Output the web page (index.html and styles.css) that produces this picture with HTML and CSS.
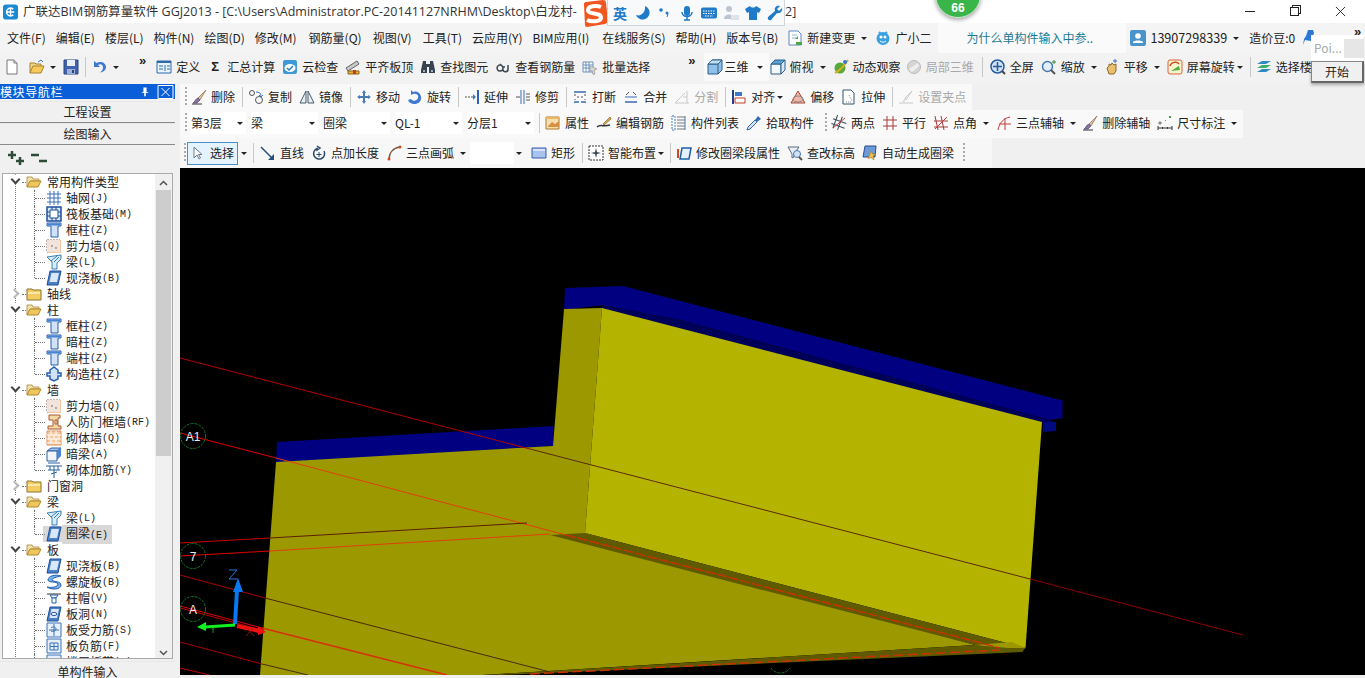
FILE: index.html
```html
<!DOCTYPE html>
<html lang="zh-CN">
<head>
<meta charset="utf-8">
<title>广联达BIM钢筋算量软件 GGJ2013</title>
<link rel="stylesheet" href="styles.css">
</head>
<body>
<svg class="defs" aria-hidden="true">
<symbol id="new" viewBox="0 0 16 16"><path d="M3 1h7l3 3v11H3z" fill="#fff" stroke="#777"/><path d="M10 1v3h3" fill="#ddd" stroke="#777"/></symbol>
<symbol id="open" viewBox="0 0 16 16"><path d="M1 14V4h5l1 1h5v2" fill="#f0d48a" stroke="#a8842c"/><path d="M1 14l3-7h11l-3 7z" fill="#f7c95c" stroke="#a8842c"/><path d="M9 3l3-2 2 2" fill="none" stroke="#3a78c8"/></symbol>
<symbol id="save" viewBox="0 0 16 16"><path d="M1 1h14v14H1z" fill="#3f62b0" stroke="#2a437e"/><path d="M4 1h8v6H4z" fill="#e8eef8"/><path d="M4 10h8v5H4z" fill="#9fb0d6"/><path d="M9 11h2v3H9z" fill="#2a437e"/></symbol>
<symbol id="undo" viewBox="0 0 16 16"><path d="M2 2v6h6L6 6c2-1.500 5-.5 5 2.500 0 2-1 3.500-3 5 4-.5 6-3 6-5.500C14 4 9 1.500 4.500 4z" fill="#3f78d0"/></symbol>
<symbol id="def" viewBox="0 0 16 16"><path d="M1 2h14v12H1z" fill="#eaf2fb" stroke="#2d6ca8"/><path d="M1 2h14v2H1z" fill="#2d6ca8"/><path d="M3 7h4M3 10h4M9 6v6M11 7h3M11 10h3" stroke="#2d6ca8" fill="none"/></symbol>
<symbol id="cloud" viewBox="0 0 16 16"><rect x="1" y="1" width="14" height="14" rx="2" fill="#3d9ad6"/><ellipse cx="8" cy="9" rx="5.500" ry="4" fill="#fff"/><path d="M5 9l2 2 4-4" fill="none" stroke="#2a7fc0" stroke-width="1.500"/></symbol>
<symbol id="level" viewBox="0 0 16 16"><path d="M1 9L12 2l2 3L3 12z" fill="#c8c8c8" stroke="#666"/><path d="M3 12h11v3H3z" fill="#e8b23a" stroke="#8a6414"/><path d="M8 11h3v4H8z" fill="#c83a1c"/></symbol>
<symbol id="binoc" viewBox="0 0 16 16"><path d="M3 2h3v3h4V2h3l2 9v3H9V8H7v6H1v-3z" fill="#37444f"/><path d="M3 11h2v2H3zM11 11h2v2h-2z" fill="#9fb4c6"/></symbol>
<symbol id="glass" viewBox="0 0 16 16"><path d="M5 6a3 3 0 1 0 .1 0M13 6v4a2.500 2.500 0 0 1-5 .5M5 5l3 3h2" fill="none" stroke="#3b4650" stroke-width="1.500"/></symbol>
<symbol id="batch" viewBox="0 0 16 16"><path d="M1 3h10v10H1z" fill="#fff" stroke="#6c8fb8"/><path d="M1 6h10M1 9h10M4 3v10M7 3v10" stroke="#6c8fb8"/><path d="M8 7l7 3-3 1 1 4-2 .500-1-4-2 1z" fill="#d9d9d9" stroke="#888" stroke-width=".6"/></symbol>
<symbol id="c3d" viewBox="0 0 16 16"><path d="M1 5l4-4h10v10l-4 4H1z" fill="#8fc0e8" stroke="#2f5f8a"/><path d="M1 5h10v10M11 5l4-4" fill="none" stroke="#2f5f8a"/><path d="M1 5l4-4h10l-4 4z" fill="#c4e0f4" stroke="#2f5f8a"/></symbol>
<symbol id="ctop" viewBox="0 0 16 16"><path d="M1 5h10v10H1z" fill="#f2f8fc" stroke="#2f5f8a"/><path d="M1 5l4-4h10l-4 4z" fill="#5aa0d8" stroke="#2f5f8a"/><path d="M11 5l4-4v10l-4 4z" fill="#d8e8f4" stroke="#2f5f8a"/></symbol>
<symbol id="orbit" viewBox="0 0 16 16"><circle cx="7" cy="9" r="5.500" fill="#5aa83a"/><path d="M2 14C6 12 11 7 15 1" stroke="#d8b020" stroke-width="2" fill="none"/><circle cx="12" cy="3" r="2" fill="#3a78c8"/></symbol>
<symbol id="loc3" viewBox="0 0 16 16"><circle cx="8" cy="8" r="6.500" fill="#d5d5d5" stroke="#bbb"/><path d="M3 10l9-6 1 3-7 6z" fill="#efefef"/></symbol>
<symbol id="full" viewBox="0 0 16 16"><circle cx="7.500" cy="7.500" r="6.500" fill="#cfe2f6" stroke="#2a5c9a" stroke-width="1.500"/><path d="M7.500 3v9M3 7.500h9" stroke="#2a5c9a" stroke-width="1.500"/><path d="M12 12l3 3" stroke="#444" stroke-width="2"/></symbol>
<symbol id="zoom" viewBox="0 0 16 16"><circle cx="6.500" cy="7.500" r="5" fill="#e2eefa" stroke="#4a78ac" stroke-width="1.500"/><path d="M10 11l4 4" stroke="#555" stroke-width="2"/><path d="M13 1v4M11 3h4" stroke="#3a8a3a"/></symbol>
<symbol id="pan" viewBox="0 0 16 16"><path d="M3 9l2-2V5l2 1 1-2 2 2 2-1v7l-2 3H5z" fill="#e8c070" stroke="#8a6a28"/><path d="M11 0v4M9 2h4" stroke="#3a6ac0"/></symbol>
<symbol id="rota" viewBox="0 0 16 16"><rect x="1" y="1" width="14" height="14" rx="2" fill="#f2f6d0" stroke="#e0603a"/><path d="M3 7c1-4 7-5 9-2" fill="none" stroke="#d04a20" stroke-width="1.500"/><path d="M4 12l8-5 1 4z" fill="#5aa83a"/></symbol>
<symbol id="floors" viewBox="0 0 16 16"><path d="M1 5l5-3h9L10 5z" fill="#2f8ac4"/><path d="M1 9l5-3h9l-5 3z" fill="#3cae6c"/><path d="M1 13l5-3h9l-5 3z" fill="#2f8ac4"/></symbol>
<symbol id="erase" viewBox="0 0 16 16"><path d="M15 1L7 9l2 2z" fill="#d8c4a0" stroke="#8a6a48" stroke-width=".7"/><path d="M7 9l2 2-3 3H2c2-1 2-4 5-5z" fill="#8a70a8" stroke="#5a4a70" stroke-width=".7"/><path d="M1 15h10" stroke="#333"/></symbol>
<symbol id="copy" viewBox="0 0 16 16"><circle cx="4" cy="4" r="2.500" fill="none" stroke="#555"/><circle cx="11" cy="11" r="3.500" fill="none" stroke="#555"/><path d="M8 3c3 0 5 1 5 4" fill="none" stroke="#3a78c8"/><path d="M11 6l2 2 2-2" fill="none" stroke="#3a78c8"/></symbol>
<symbol id="mirror" viewBox="0 0 16 16"><path d="M7 2L1 14h6zM9 2l6 12H9z" fill="#e6eef6" stroke="#4a5a6a"/></symbol>
<symbol id="move" viewBox="0 0 16 16"><path d="M8 1l2 3H9v3h3V6l3 2-3 2V9H9v3h1l-2 3-2-3h1V9H4v1L1 8l3-2v1h3V4H6z" fill="#4a7ab8"/></symbol>
<symbol id="rot" viewBox="0 0 16 16"><path d="M4 1v5l2-1c3-1 6 1 5 4s-5 4-7 1l-3 1c2 6 12 5 13-1 1-5-4-9-8-7z" fill="#3f78d0"/></symbol>
<symbol id="ext" viewBox="0 0 16 16"><path d="M1 8h9" stroke="#555" stroke-dasharray="2 1"/><path d="M9 5l3 3-3 3z" fill="#3a78c8"/><path d="M14 1v14" stroke="#2f5fb0" stroke-width="2"/></symbol>
<symbol id="trim" viewBox="0 0 16 16"><path d="M6 1v14M9 1v14" stroke="#3a6ab0"/><path d="M1 8h4M11 5h4M11 8h4M11 11h4" stroke="#555"/></symbol>
<symbol id="brk" viewBox="0 0 16 16"><path d="M2 3h12M2 13h5M9 13h5" stroke="#3a6ab0" stroke-width="1.500"/><path d="M5 8h2M9 8h2M3 5v2M13 5v2M3 11v-1M13 11v-1" stroke="#555"/></symbol>
<symbol id="merge" viewBox="0 0 16 16"><path d="M2 13h12" stroke="#3a6ab0" stroke-width="1.500"/><path d="M2 8h12" stroke="#3a6ab0"/><path d="M3 6l3-3M13 6l-3-3" stroke="#555" fill="none"/></symbol>
<symbol id="split" viewBox="0 0 16 16"><path d="M1 14h14M1 14L11 4M13 2v12M9 8h4" stroke="#c8c8c8" fill="none"/></symbol>
<symbol id="algn" viewBox="0 0 16 16"><path d="M2 1v14" stroke="#1f3f90" stroke-width="2"/><path d="M4 3h7v4H4z" fill="#3a78c8"/><path d="M4 9h10v5H4z" fill="#fff" stroke="#c83a1c"/></symbol>
<symbol id="offs" viewBox="0 0 16 16"><path d="M8 1l7 12H1z" fill="#f2b6a8" stroke="#a8483a" transform="translate(0 1)"/><ellipse cx="8" cy="10" rx="5" ry="3" fill="none" stroke="#888"/></symbol>
<symbol id="strch" viewBox="0 0 16 16"><path d="M2 1h8l3 3v11H2z" fill="#fff" stroke="#33556e"/><path d="M8 6l3 6M5 13h6" stroke="#888" stroke-dasharray="1 1"/></symbol>
<symbol id="grip" viewBox="0 0 16 16"><path d="M14 2L7 9l1 2zM1 14h14" stroke="#c8c8c8" fill="none"/><path d="M7 9l-3 4h3z" fill="#ddd"/></symbol>
<symbol id="attr" viewBox="0 0 16 16"><path d="M1 2h13v12H1z" fill="#f7deb0" stroke="#a87a2c"/><path d="M1 2h13v2H1z" fill="#e8b868"/><path d="M3 11l4-4 3 2 4-3v6H3z" fill="#d89040"/></symbol>
<symbol id="edit" viewBox="0 0 16 16"><path d="M1 12c3-3 6 0 13-2" fill="none" stroke="#333" stroke-width="1.500"/><path d="M14 2L7 9l1 1 7-6z" fill="#d8a85a" stroke="#8a6a28" stroke-width=".7"/></symbol>
<symbol id="list" viewBox="0 0 16 16"><path d="M6 2h8M6 5h8M6 8h8M6 11h8M6 14h8" stroke="#777"/><path d="M1 1h3v14H1z" fill="#fff" stroke="#4a7ab8" stroke-dasharray="2 1"/><path d="M14 1v14" stroke="#4a7ab8"/></symbol>
<symbol id="pick" viewBox="0 0 16 16"><path d="M12 1l3 3-4 3-2-2z" fill="#3a6ab0"/><path d="M9 5l2 2-7 7-3 1 1-3z" fill="#cfe2f6" stroke="#3a6ab0"/></symbol>
<symbol id="two" viewBox="0 0 16 16"><path d="M4 1v14M9 1v14M1 6h14M1 11h14" stroke="#3a4a5a" transform="rotate(20 8 8)"/><path d="M2 13L14 3" stroke="#c83a3a"/></symbol>
<symbol id="para" viewBox="0 0 16 16"><path d="M5 1v14M11 1v14M1 5h14M1 11h14" stroke="#a83a3a"/></symbol>
<symbol id="angl" viewBox="0 0 16 16"><path d="M2 1l3 14M8 1l3 14M1 6h14M1 12h14" stroke="#a83a3a"/><path d="M2 14L14 2" stroke="#c83a3a"/></symbol>
<symbol id="three" viewBox="0 0 16 16"><path d="M2 15C3 8 8 3 14 2M9 3v12M3 9h12" stroke="#c83a3a" fill="none"/></symbol>
<symbol id="dim" viewBox="0 0 16 16"><path d="M1 11v4M15 11v4M1 13h14" stroke="#333"/><path d="M5 13h1M10 13h1" stroke="#333" stroke-width="2"/><path d="M12 1h2v2h-2z" fill="#4a9a4a"/><path d="M2 7h2v2H2zM8 5l1 1" stroke="#888" fill="#888"/></symbol>
<symbol id="cursor" viewBox="0 0 16 16"><path d="M5 2v11l3-3 2 4 1.500-1-2-3.500h3.500z" fill="#fff" stroke="#6a7a8a"/></symbol>
<symbol id="line" viewBox="0 0 16 16"><path d="M1 2l12 12" stroke="#25517a" stroke-width="1.500"/><path d="M14 9v6H8z" fill="#25517a"/></symbol>
<symbol id="addl" viewBox="0 0 16 16"><path d="M6 1l3 2-3 2V3.500a5.500 5.500 0 1 0 7 2.500" fill="none" stroke="#2a4a6a" stroke-width="1.500"/><path d="M8 7v5M5.500 9.500h5" stroke="#2a4a6a"/></symbol>
<symbol id="arc" viewBox="0 0 16 16"><path d="M3 15C3 8 7 3 14 2" fill="none" stroke="#7a5a3a" stroke-width="1.500"/><circle cx="3" cy="14" r="1.500" fill="#d04a20"/><circle cx="14" cy="2" r="1.500" fill="#d04a20"/></symbol>
<symbol id="rect" viewBox="0 0 16 16"><path d="M1 3h14v10H1z" fill="#a8c4ee" stroke="#3a5ca8"/><path d="M2 4h12v2H2z" fill="#d8e4f8"/></symbol>
<symbol id="smart" viewBox="0 0 16 16"><path d="M1 1h14v14H1z" fill="#fff" stroke="#333" stroke-dasharray="2 1"/><path d="M8 3l1 4 4 1-4 1-1 4-1-4-4-1 4-1z" fill="#3a4a5a"/></symbol>
<symbol id="modb" viewBox="0 0 16 16"><path d="M6 3h9l-2 11H4z" fill="#e4f0fa" stroke="#1f5fa8" stroke-width="1.500"/><path d="M2 4v9" stroke="#d04a20" stroke-width="2"/></symbol>
<symbol id="elev" viewBox="0 0 16 16"><path d="M1 2h11L7 9v3L5 13V9z" fill="#e8eef6" stroke="#5a6a7a"/><circle cx="10" cy="9" r="3.500" fill="#cfe2f6" stroke="#4a78ac"/><path d="M12 12l3 3" stroke="#555" stroke-width="2"/></symbol>
<symbol id="auto" viewBox="0 0 16 16"><path d="M3 1h11l-1 11H1z" fill="#6a9ad8" stroke="#2a4f8a"/><path d="M9 6l1.500 3 3.500.500-3 1.500 1 4-3-2.500-3 1 1.500-3z" fill="#f0c040" stroke="#b07a20" stroke-width=".6"/></symbol>
<symbol id="doc" viewBox="0 0 16 16"><path d="M2 1h9l3 3v11H2z" fill="#fff" stroke="#5a8ac0"/><path d="M5 5h5M5 8h4" stroke="#8ab0d8"/><path d="M8 9h3V6zM9 12h6v3H9z" fill="#4aa84a"/></symbol>
<symbol id="bot" viewBox="0 0 16 16"><circle cx="8" cy="8.500" r="6.500" fill="#3aa0e0"/><path d="M4 2l2 2M12 2l-2 2" stroke="#3aa0e0" stroke-width="2"/><circle cx="6" cy="7" r="1.500" fill="#fff"/><circle cx="10" cy="7" r="1.500" fill="#fff"/><path d="M5 11c2 1.500 4 1.500 6 0" stroke="#fff" fill="none"/></symbol>
<symbol id="user" viewBox="0 0 16 16"><rect width="16" height="16" rx="2" fill="#4a94cc"/><circle cx="8" cy="6" r="2.800" fill="#fff"/><path d="M3 12c1-2 9-2 10 0v1H3z" fill="#fff"/></symbol>
<symbol id="fo" viewBox="0 0 16 16"><path d="M1 13V3h5l1 2h6v2H5l-4 6z" fill="#f3e3ae" stroke="#b89a50"/><path d="M1 13l3-6h11l-3 6z" fill="#efc65c" stroke="#b0882c"/></symbol>
<symbol id="fc" viewBox="0 0 16 16"><path d="M1 3h5l1 1h8v10H1z" fill="#f4cd62" stroke="#8a7430"/><path d="M2 6h12v2H2z" fill="#fbe9a8"/></symbol>
<symbol id="grid" viewBox="0 0 16 16"><path d="M1 4h14M1 8h14M1 12h14M4 1v14M8 1v14M12 1v14" stroke="#3a70b8"/></symbol>
<symbol id="raft" viewBox="0 0 16 16"><path d="M1 1h14v14H1z" fill="#d8e8f8" stroke="#1f4f9a" stroke-width="1.500"/><path d="M4 4h8v8H4zM1 6h3M1 10h3M12 6h3M12 10h3M6 1v3M10 1v3M6 12v3M10 12v3" stroke="#1f4f9a" fill="#fff"/></symbol>
<symbol id="col" viewBox="0 0 16 16"><path d="M1 1h14v3h-3v11H5V4H1z" fill="#cfe2f6" stroke="#2a5fb0"/><path d="M1.500 1.500h13v2h-13z" fill="#4a84d0"/></symbol>
<symbol id="wall" viewBox="0 0 16 16"><path d="M1 2h13v12H1z" fill="#f6e8dc" stroke="#8a6a5a" stroke-dasharray="2 1"/><path d="M14 2l1 1v12H2l-1-1" fill="#f0c8a8"/><path d="M1 2h13v12H1z" fill="#f2e4da"/><circle cx="6" cy="8" r="1" fill="#999"/><circle cx="10" cy="10" r="1" fill="#999"/></symbol>
<symbol id="beam" viewBox="0 0 16 16"><path d="M1 3l14-2v4l-4 4v6H6V8z" fill="#d8ecf8" stroke="#3a80b8"/><path d="M5 7l6-5M8 8l5-5" stroke="#3a80b8"/></symbol>
<symbol id="slab" viewBox="0 0 16 16"><path d="M4 1h11l-3 14H1z" fill="#4a80c8" stroke="#1f4f9a"/><path d="M5.500 3h7.500l-2 9H3.500z" fill="#d8e8f8"/></symbol>
<symbol id="gzz" viewBox="0 0 16 16"><path d="M4 4l4-3 4 3v3h3v3h-3v3l-4 2-4-2v-3H1V7h3z" fill="#cfe2f6" stroke="#2a5fb0" stroke-width="1.500"/></symbol>
<symbol id="door" viewBox="0 0 16 16"><path d="M3 1h11v3h-2v8h3v3H2v-3h5V6H3z" fill="#f4d8a8" stroke="#a85a2c"/><path d="M9 6h2v4H9z" fill="#fff" stroke="#a85a2c"/></symbol>
<symbol id="brick" viewBox="0 0 16 16"><path d="M1 1h14v14H1z" fill="#f6c8a0" stroke="#d89060"/><path d="M1 5h14M1 9h14M1 13h14M5 1v4M10 1v4M3 5v4M8 5v4M13 5v4M5 9v4M10 9v4" stroke="#fff"/></symbol>
<symbol id="hbeam" viewBox="0 0 16 16"><path d="M1 5l4-3h10l-4 3z" fill="#a8c4ee" stroke="#2a5fa0"/><path d="M1 5h10v10H1z" fill="#f2f6fa" stroke="#2a5fa0"/><path d="M11 5l4-3v8l-4 4z" fill="#4a84d0"/></symbol>
<symbol id="wreb" viewBox="0 0 16 16"><path d="M0 4h16M2 8h12M8 4v12M4 4v4M12 4v4M2 1h12" stroke="#2a5fa0" fill="none"/><path d="M5 12l6-2" stroke="#2a5fa0"/></symbol>
<symbol id="spir" viewBox="0 0 16 16"><path d="M15 2C9 0 2 2 2 6c0 3 9 1 10 4 0 3-6 4-11 3 4 3 14 3 14-2 0-4-8-3-9-5 0-2 5-3 9-4z" fill="#7ab0e8" stroke="#1f5fb0"/></symbol>
<symbol id="cap" viewBox="0 0 16 16"><path d="M1 3h14v2H1z" fill="#999"/><path d="M4 5h8l-2 3H6z" fill="#fff" stroke="#1f5fb0"/><path d="M6 8h4v5H6z" fill="#fff" stroke="#1f5fb0"/></symbol>
<symbol id="hole" viewBox="0 0 16 16"><use href="#slab"/><ellipse cx="8" cy="8" rx="3" ry="1.500" fill="#fff" stroke="#1f4f9a"/></symbol>
<symbol id="rbs" viewBox="0 0 16 16"><path d="M1 1h14v14H1z" fill="#e6f0fa" stroke="#3a70b8"/><path d="M8 2v12M3 8h10" stroke="#3a70b8"/><path d="M5 6c2-2 5-1 5 1s-3 3-5 2" fill="none" stroke="#3a70b8"/></symbol>
<symbol id="rbf" viewBox="0 0 16 16"><path d="M1 1h14v14H1z" fill="#e6f0fa" stroke="#3a70b8"/><path d="M4 5h8v7H4zM8 5v7M4 8.500h8" fill="none" stroke="#3a70b8"/></symbol>
</svg>

<div class="app">
  <header class="title">
    <svg class="logo" viewBox="0 0 16 16"><rect width="16" height="16" rx="3" fill="#1a8ad4"/><path d="M8 3v10M4 8h8M11 5a4.200 4.200 0 1 0 0 6" fill="none" stroke="#fff" stroke-width="1.600"/></svg>
    <span class="title-text">广联达BIM钢筋算量软件 GGJ2013 - [C:\Users\Administrator.PC-20141127NRHM\Desktop\白龙村-</span>
    <span class="title-end">2]</span>
    <div class="win">
      <i class="win-min"></i>
      <i class="win-max"></i>
      <svg class="win-close" viewBox="0 0 12 12"><path d="M1 1l10 10M11 1L1 11" stroke="#222" fill="none"/></svg>
    </div>
  </header>

  <nav class="menu">
    <span>文件(F)</span><span>编辑(E)</span><span>楼层(L)</span><span>构件(N)</span><span>绘图(D)</span><span>修改(M)</span><span class="mg2">钢筋量(Q)</span><span class="mg1">视图(V)</span><span class="mg1">工具(T)</span><span>云应用(Y)</span><span>BIM应用(I)</span><span class="mg3">在线服务(S)</span><span>帮助(H)</span><span>版本号(B)</span>
    <span class="it m-new"><svg class="ic"><use href="#doc"/></svg>新建变更<i class="car"></i></span>
    <span class="it m-bot"><svg class="ic"><use href="#bot"/></svg>广小二</span>
    <span class="notice">为什么单构件输入中参..</span>
    <span class="it m-user"><svg class="ic"><use href="#user"/></svg><b class="phone">13907298339</b><i class="car"></i></span>
    <span>造价豆:0</span>
  </nav>

  <div class="bar bar1">
    <svg class="ic"><use href="#new"/></svg>
    <span class="it c1"><svg class="ic"><use href="#open"/></svg><i class="car"></i></span>
    <svg class="ic"><use href="#save"/></svg>
    <i class="sep c3"></i>
    <span class="it c4"><svg class="ic"><use href="#undo"/></svg><i class="car"></i></span>
    <b class="more c5">»</b>
    <span class="it c6"><svg class="ic"><use href="#def"/></svg>定义</span>
    <span class="it"><b class="sigma">Σ</b>汇总计算</span>
    <span class="it"><svg class="ic"><use href="#cloud"/></svg>云检查</span>
    <span class="it"><svg class="ic"><use href="#level"/></svg>平齐板顶</span>
    <span class="it"><svg class="ic"><use href="#binoc"/></svg>查找图元</span>
    <span class="it"><svg class="ic"><use href="#glass"/></svg>查看钢筋量</span>
    <span class="it"><svg class="ic"><use href="#batch"/></svg>批量选择</span>
    <b class="more c7">»</b>
    <span class="it lite c8"><svg class="ic"><use href="#c3d"/></svg>三维<i class="car"></i></span>
    <span class="it c9"><svg class="ic"><use href="#ctop"/></svg>俯视<i class="car"></i></span>
    <span class="it"><svg class="ic"><use href="#orbit"/></svg>动态观察</span>
    <span class="it off c10"><svg class="ic"><use href="#loc3"/></svg>局部三维</span>
    <i class="sep c11"></i>
    <span class="it"><svg class="ic"><use href="#full"/></svg>全屏</span>
    <span class="it"><svg class="ic"><use href="#zoom"/></svg>缩放<i class="car"></i></span>
    <span class="it"><svg class="ic"><use href="#pan"/></svg>平移<i class="car"></i></span>
    <span class="it tight"><svg class="ic"><use href="#rota"/></svg>屏幕旋转<i class="car"></i></span>
    <i class="sep"></i>
    <span class="it"><svg class="ic"><use href="#floors"/></svg>选择楼</span>
  </div>

  <div class="main">
    <aside class="side">
      <div class="side-head"><span>模块导航栏</span><svg class="pin" viewBox="0 0 10 12"><path d="M3 1h4v6h2v1H6v4H4V8H1V7h2zM5 2v5" fill="#fff"/></svg><svg class="side-x" viewBox="0 0 16 14"><path d="M.5.500h15v13H.5zM4 3l8 8M12 3l-8 8" fill="none" stroke="#fff"/></svg></div>
      <div class="side-btn">工程设置</div>
      <div class="side-btn">绘图输入</div>
      <div class="side-tools">
        <svg class="tool-ic" viewBox="0 0 18 16"><path d="M5 1v8M1 5h8M13 7v8M9 11h8" stroke="#2e4a38" stroke-width="2.500"/></svg>
        <svg class="tool-ic" viewBox="0 0 18 16"><path d="M1 5h8M9 11h8" stroke="#2e4a38" stroke-width="2.500"/></svg>
      </div>
      <div class="tree-box">
        <ul class="tree">
          <li class="r"><i class="chev open"></i><svg class="ic"><use href="#fo"/></svg>常用构件类型</li>
          <li class="l"><svg class="ic"><use href="#grid"/></svg>轴网<em>(J)</em></li>
          <li class="l"><svg class="ic"><use href="#raft"/></svg>筏板基础<em>(M)</em></li>
          <li class="l"><svg class="ic"><use href="#col"/></svg>框柱<em>(Z)</em></li>
          <li class="l"><svg class="ic"><use href="#wall"/></svg>剪力墙<em>(Q)</em></li>
          <li class="l"><svg class="ic"><use href="#beam"/></svg>梁<em>(L)</em></li>
          <li class="l end"><svg class="ic"><use href="#slab"/></svg>现浇板<em>(B)</em></li>
          <li class="r"><i class="chev"></i><svg class="ic"><use href="#fc"/></svg>轴线</li>
          <li class="r"><i class="chev open"></i><svg class="ic"><use href="#fo"/></svg>柱</li>
          <li class="l"><svg class="ic"><use href="#col"/></svg>框柱<em>(Z)</em></li>
          <li class="l"><svg class="ic"><use href="#col"/></svg>暗柱<em>(Z)</em></li>
          <li class="l"><svg class="ic"><use href="#col"/></svg>端柱<em>(Z)</em></li>
          <li class="l end"><svg class="ic"><use href="#gzz"/></svg>构造柱<em>(Z)</em></li>
          <li class="r"><i class="chev open"></i><svg class="ic"><use href="#fo"/></svg>墙</li>
          <li class="l"><svg class="ic"><use href="#wall"/></svg>剪力墙<em>(Q)</em></li>
          <li class="l"><svg class="ic"><use href="#door"/></svg>人防门框墙<em>(RF)</em></li>
          <li class="l"><svg class="ic"><use href="#brick"/></svg>砌体墙<em>(Q)</em></li>
          <li class="l"><svg class="ic"><use href="#hbeam"/></svg>暗梁<em>(A)</em></li>
          <li class="l end"><svg class="ic"><use href="#wreb"/></svg>砌体加筋<em>(Y)</em></li>
          <li class="r"><i class="chev"></i><svg class="ic"><use href="#fc"/></svg>门窗洞</li>
          <li class="r"><i class="chev open"></i><svg class="ic"><use href="#fo"/></svg>梁</li>
          <li class="l"><svg class="ic"><use href="#beam"/></svg>梁<em>(L)</em></li>
          <li class="l end sel"><svg class="ic"><use href="#slab"/></svg><span>圈梁<em>(E)</em></span></li>
          <li class="r"><i class="chev open"></i><svg class="ic"><use href="#fo"/></svg>板</li>
          <li class="l"><svg class="ic"><use href="#slab"/></svg>现浇板<em>(B)</em></li>
          <li class="l"><svg class="ic"><use href="#spir"/></svg>螺旋板<em>(B)</em></li>
          <li class="l"><svg class="ic"><use href="#cap"/></svg>柱帽<em>(V)</em></li>
          <li class="l"><svg class="ic"><use href="#hole"/></svg>板洞<em>(N)</em></li>
          <li class="l"><svg class="ic"><use href="#rbs"/></svg>板受力筋<em>(S)</em></li>
          <li class="l"><svg class="ic"><use href="#rbf"/></svg>板负筋<em>(F)</em></li>
          <li class="l"><svg class="ic"><use href="#rbf"/></svg>楼层板带<em>(H)</em></li>
        </ul>
        <div class="vscroll">
          <svg class="sc-arrow" viewBox="0 0 9 6"><path d="M1 5l3.500-3.500L8 5" fill="none" stroke="#555" stroke-width="1.500"/></svg>
          <div class="sc-thumb"></div>
          <svg class="sc-arrow sc-down" viewBox="0 0 9 6"><path d="M1 1l3.500 3.500L8 1" fill="none" stroke="#555" stroke-width="1.500"/></svg>
        </div>
      </div>
      <div class="side-btn last">单构件输入</div>
    </aside>

    <section class="work">
      <div class="bar bar2">
        <i class="grip"></i>
        <span class="it"><svg class="ic"><use href="#erase"/></svg>删除</span>
        <i class="sep"></i>
        <span class="it"><svg class="ic"><use href="#copy"/></svg>复制</span>
        <span class="it"><svg class="ic"><use href="#mirror"/></svg>镜像</span>
        <i class="sep"></i>
        <span class="it"><svg class="ic"><use href="#move"/></svg>移动</span>
        <span class="it"><svg class="ic"><use href="#rot"/></svg>旋转</span>
        <i class="sep"></i>
        <span class="it"><svg class="ic"><use href="#ext"/></svg>延伸</span>
        <span class="it"><svg class="ic"><use href="#trim"/></svg>修剪</span>
        <i class="sep"></i>
        <span class="it"><svg class="ic"><use href="#brk"/></svg>打断</span>
        <span class="it"><svg class="ic"><use href="#merge"/></svg>合并</span>
        <span class="it off"><svg class="ic"><use href="#split"/></svg>分割</span>
        <i class="sep"></i>
        <span class="it tight"><svg class="ic"><use href="#algn"/></svg>对齐<i class="car"></i></span>
        <span class="it"><svg class="ic"><use href="#offs"/></svg>偏移</span>
        <span class="it"><svg class="ic"><use href="#strch"/></svg>拉伸</span>
        <i class="sep"></i>
        <span class="it off"><svg class="ic"><use href="#grip"/></svg>设置夹点</span>
      </div>
      <div class="bar bar3">
        <i class="grip"></i>
        <span class="combo w1">第3层<i class="car"></i></span>
        <span class="combo w2">梁<i class="car"></i></span>
        <span class="combo w2">圈梁<i class="car"></i></span>
        <span class="combo w2">QL-1<i class="car"></i></span>
        <span class="combo w2">分层1<i class="car"></i></span>
        <i class="sep"></i>
        <span class="it"><svg class="ic"><use href="#attr"/></svg>属性</span>
        <span class="it"><svg class="ic"><use href="#edit"/></svg>编辑钢筋</span>
        <span class="it"><svg class="ic"><use href="#list"/></svg>构件列表</span>
        <span class="it"><svg class="ic"><use href="#pick"/></svg>拾取构件</span>
        <i class="grip g10"></i>
        <span class="it"><svg class="ic"><use href="#two"/></svg>两点</span>
        <span class="it"><svg class="ic"><use href="#para"/></svg>平行</span>
        <span class="it"><svg class="ic"><use href="#angl"/></svg>点角<i class="car"></i></span>
        <span class="it"><svg class="ic"><use href="#three"/></svg>三点辅轴<i class="car"></i></span>
        <span class="it c12"><svg class="ic"><use href="#erase"/></svg>删除辅轴</span>
        <span class="it"><svg class="ic"><use href="#dim"/></svg>尺寸标注<i class="car"></i></span>
      </div>
      <div class="bar bar4">
        <i class="grip"></i>
        <span class="it selbtn"><svg class="ic"><use href="#cursor"/></svg>选择</span><i class="car"></i>
        <i class="sep c3"></i>
        <span class="it"><svg class="ic"><use href="#line"/></svg>直线</span>
        <span class="it"><svg class="ic"><use href="#addl"/></svg>点加长度</span>
        <span class="it"><svg class="ic"><use href="#arc"/></svg>三点画弧<i class="car"></i></span>
        <span class="combo w3"></span><i class="car"></i>
        <span class="it c13"><svg class="ic"><use href="#rect"/></svg>矩形</span>
        <i class="sep"></i>
        <span class="it tight"><svg class="ic"><use href="#smart"/></svg>智能布置<i class="car"></i></span>
        <i class="sep c14"></i>
        <span class="it"><svg class="ic"><use href="#modb"/></svg>修改圈梁段属性</span>
        <span class="it"><svg class="ic"><use href="#elev"/></svg>查改标高</span>
        <span class="it"><svg class="ic"><use href="#auto"/></svg>自动生成圈梁</span>
        <i class="grip g9"></i>
      </div>
      <svg class="canvas" viewBox="180 168 1185 507">
        <rect x="180" y="168" width="1185" height="507" fill="#000"/>
        <path d="M565 288L623 286L1062.500 400.500V418L1050 420L680 320L602 305L564 310z" fill="#000080"/>
        <path d="M602 305L680 320L1050 420L1056 423L1042 423L602 309z" fill="#000058"/>
        <path d="M1043 422H1056V431L1043 432z" fill="#000a80"/>
        <path d="M277 442L554 426L553 446L276 463z" fill="#000080"/>
        <path d="M260 675L276 462L553 446L564 309L602 308L585 533L975 645L482 675z" fill="#9c9800"/>
        <path d="M602 308L1042 422L1025.500 648L585 533z" fill="#b4b400"/>
        <path d="M550 535L585 533L1026 648L1020 651L975 645z" fill="#5f5a00"/>
        <path d="M975 645L1025 648L1022.500 652L500 675H484z" fill="#5f5a00"/>
        <path d="M975 645L1012 642L1025.500 648L1008 648z" fill="#9c9800"/>
        <path d="M566 535L1000 648" stroke="#c83200" stroke-width="1.500" stroke-dasharray="10 2"/>
        <path d="M530 674L1000 650" stroke="#c83200" stroke-width="1.500" stroke-dasharray="10 4"/>
        <g fill="none" stroke-width="1">
          <path d="M180 358L530 449" stroke="#b40000"/><path d="M530 449L1030 579" stroke="#5a2a00"/><path d="M1030 579L1243 635" stroke="#900000"/>
          <path d="M180 433L276 458" stroke="#e00000"/><path d="M276 458L566 535" stroke="#e04000"/>
          <path d="M180 543L270 538" stroke="#c80000"/><path d="M270 538L527 523" stroke="#5a2000"/>
          <path d="M180 556L270 551" stroke="#e00000"/><path d="M270 551L550 534" stroke="#e04000"/>
          <path d="M180 575L265 598" stroke="#a80000"/><path d="M265 598L550 672" stroke="#4a2a00"/>
          <path d="M180 606L262 628" stroke="#e00000"/><path d="M262 628L447 675" stroke="#d83000" stroke-width="1.500"/><path d="M180 608L262 630" stroke="#c00000"/>
          <path d="M180 642L262 664" stroke="#a80000"/><path d="M262 664L308 675" stroke="#4a2a00"/>
          <path d="M180 668L210 675" stroke="#c00000"/>
          <g stroke="#14702c" stroke-dasharray="3 1">
            <circle cx="193" cy="436" r="12.500"/><circle cx="193" cy="556" r="12.500"/><circle cx="193" cy="609" r="12.500"/>
            <path d="M771 668a11.500 11.500 0 0 0 19 0"/>
          </g>
        </g>
        <g class="axis-label"><text x="193" y="441">A1</text><text x="193" y="561">7</text><text x="193" y="614">A</text></g>
        <path d="M235 624L237 590" stroke="#0a78f0" stroke-width="4"/><path d="M238 578L243 592H233z" fill="#0a78f0"/>
        <path d="M235 625L205 627" stroke="#10f020" stroke-width="3"/><path d="M197 627L206 622V631z" fill="#10f020"/>
        <path d="M237 626L259 631" stroke="#f01010" stroke-width="4"/><path d="M266 632L258 626V635z" fill="#f01010"/>
        <path d="M229 570H237L229 579H238" fill="none" stroke="#2a78e0"/>
        <path d="M211 627L213 630L215 627M213 630V633" fill="none" stroke="#10b020" stroke-width=".8"/>
        <path d="M246 627L254 636M254 627L246 636" fill="none" stroke="#a02020" stroke-width=".8"/>
      </svg>
    </section>
  </div>
</div>

<div class="ime">
  <svg class="ime-s" viewBox="0 0 28 28"><path d="M4 5Q3 3 6 2L23 0Q26 0 26 3L28 21Q28 23 25 24L7 27Q5 27 5 25z" fill="#f0561f"/><path d="M21 7C16 5 8 6 8 10C8 15 21 12 21 17.500C21 22 11 22 7 20" fill="none" stroke="#fff" stroke-width="4"/></svg>
  <span class="ime-bar">
    <b class="ime-en">英</b>
    <svg class="ime-ic" viewBox="0 0 16 16"><path d="M10 1a7 7 0 1 1-9 9c5 2 10-3 9-9z" fill="#1f7ac8"/></svg>
    <svg class="ime-ic" viewBox="0 0 16 16"><circle cx="4" cy="5" r="1.800" fill="#1f7ac8"/><circle cx="10" cy="8" r="1.500" fill="#1f7ac8"/><path d="M10 12l1-3" stroke="#1f7ac8"/></svg>
    <svg class="ime-ic" viewBox="0 0 16 16"><rect x="5" y="1" width="6" height="10" rx="3" fill="#1f7ac8"/><path d="M3 7c0 6 10 6 10 0M8 12v3M5 15h6" fill="none" stroke="#1f7ac8" stroke-width="1.500"/></svg>
    <svg class="ime-ic" viewBox="0 0 16 16"><rect y="2.500" width="16" height="11" rx="2" fill="#1f7ac8"/><path d="M2 6h12M2 8.500h12M4 11h8" stroke="#fff" stroke-dasharray="1.500 1"/></svg>
    <svg class="ime-ic" viewBox="0 0 16 16"><circle cx="6" cy="4" r="3" fill="#bcc6d0"/><path d="M1 14c0-6 10-6 10 0z" fill="#bcc6d0"/><rect x="8" y="10" width="8" height="5" fill="#dde3e8"/></svg>
    <svg class="ime-ic" viewBox="0 0 16 16"><path d="M5 1L0 4l2 4 2-1v8h8V7l2 1 2-4-5-3c-1 2-5 2-6 0z" fill="#1f7ac8"/></svg>
    <svg class="ime-ic" viewBox="0 0 16 16"><path d="M15 3l-3 3-2-2 3-3c-3-1-6 1-5 5L1 12c-1 2 1 4 3 3l6-7c3 1 6-2 5-5z" fill="#1f7ac8"/></svg>
  </span>
</div>

<div class="badge"><span>66</span></div>
<svg class="bell" viewBox="0 0 12 16"><path d="M5 0h5l1 3-3 8-6-1-2 5 1-6 2-3z" fill="#2a78d0"/></svg>
<b class="more tail">»</b>
<div class="pop">
  <div class="pop-top"><span>Poi...</span><i></i></div>
  <div class="pop-btn">开始</div>
</div>
</body>
</html>
```
FILE: styles.css
```css
* { box-sizing: border-box; }
html, body { margin: 0; height: 678px; overflow: hidden; }
body {
  width: 1365px;
  position: relative;
  font: 12px/16px "Noto Sans CJK SC", "Liberation Sans", sans-serif;
  color: #222;
  background: #f0f0f0;
}
.defs { position: absolute; width: 0; height: 0; }
.app { display: flex; flex-direction: column; height: 678px; }

.title {
  height: 23px; background: #fff; display: flex; align-items: center; padding-left: 3px;
  font-family: "Open Sans", "Noto Sans CJK SC", sans-serif; font-size: 12.5px; color: #333; white-space: nowrap;
}
.logo { width: 15px; height: 16px; margin-right: 5px; flex: none; }
.title-text { width: 570px; flex: none; }
.title-end { margin-left: 192px; }
.win { margin-left: auto; display: flex; align-items: center; width: 120px; height: 23px; }
.win-min { width: 10px; height: 1px; background: #222; }
.win-max { width: 9px; height: 9px; border: 1px solid #222; margin-left: 35px; box-shadow: 2px -2px 0 -1px #fff, 2px -2px 0 0 #222; }
.win-close { width: 11px; height: 11px; margin-left: 36px; }

.menu { height: 30px; display: flex; align-items: center; padding-left: 7px; gap: 10px; background: #f4f4f4; white-space: nowrap; }
.mg1 { margin-left: 1px; }
.mg2 { margin-left: 2px; }
.mg3 { margin-left: 3px; }
.m-new { margin-left: -1px; }
.m-bot { margin-left: -2px; }
.notice { width: 188px; height: 30px; line-height: 30px; margin-left: -3px; padding-left: 28px; background: #fafafa; color: #1c7a96; }
.m-user { margin-left: -6px; }
.phone { font-weight: 400; font-size: 12.6px; }

.it { display: flex; align-items: center; gap: 4px; white-space: nowrap; flex: none; }
.ic { width: 16px; height: 16px; flex: none; display: block; }
.off { color: #a8a8a8; }
.car { width: 0; height: 0; flex: none; margin-left: 2px; border: 3px solid transparent; border-top: 3px solid #222; border-bottom: 0; display: block; }
.tight .car { margin-left: -2px; }
.sep { width: 1px; height: 20px; background: #c8c8c8; flex: none; display: block; margin-right: -2px; }
.grip { width: 2px; height: 20px; flex: none; display: block; background: repeating-linear-gradient(#aaa 0 2px, transparent 2px 4px); }
.grip + * { margin-left: -3px; }
.g9 { margin-left: 2px; }
.g10 { margin-left: 4px; }
.more { font: 700 13px/10px "Liberation Sans", sans-serif; align-self: flex-start; margin-top: 3px; }

.bar { display: flex; align-items: center; gap: 7px; white-space: nowrap; }
.bar1 { height: 31px; padding: 0 0 3px 4px; background: #f2f2f2; overflow: hidden; }
.c1 { margin-left: 2px; gap: 0; }
.c1 .car, .c4 .car { margin-left: 5px; }
.c3 { margin-left: -1px; margin-right: -1px; }
.c4 { gap: 0; }
.c5 { margin-left: 13px; }
.c6 { margin-left: 3px; }
.sigma { width: 16px; text-align: center; font: 700 13px/16px "Liberation Sans", sans-serif; }
.c7 { margin-left: 31px; }
.c8 { gap: 2px; padding: 0 6px 0 3px; height: 28px; background: #fafafa; margin-left: 1px; }
.c8 .car { margin-left: 6px; }
.c9 { margin-left: -6px; }
.c10 { margin-left: -2px; }
.c11 { margin: 0 0 0 1px; }
.c12 { margin-left: -1px; }
.c13 { margin-left: 2px; }
.c14 { margin-left: -1px; }

.main { flex: 1; display: flex; min-height: 0; }
.side { width: 175px; flex: none; display: flex; flex-direction: column; background: #f0f0f0; }
.side-head { height: 15px; background: #0a5fd8; color: #fff; display: flex; align-items: center; padding-right: 1px; letter-spacing: .6px; line-height: 15px; }
.side-head span { flex: 1; }
.pin { width: 8px; height: 11px; margin-right: 8px; }
.side-x { width: 17px; height: 14px; }
.side-btn { height: 22px; line-height: 19px; text-align: center; border-bottom: 1px solid #8a8a8a; border-top: 1px solid #e8e8e8; background: #f0f0f0; flex: none; }
.side-head + .side-btn { margin-top: 2px; }
.side-tools { height: 26px; display: flex; align-items: center; gap: 5px; padding-left: 7px; flex: none; }
.tool-ic { width: 18px; height: 16px; }
.tree-box { flex: 1; min-height: 0; margin: 2px 2px 2px 2px; border: 1px solid #aaa; background: #fff; position: relative; overflow: hidden; }
.tree { list-style: none; margin: 0; padding: 0; background: repeating-linear-gradient(#777 0 1px, transparent 1px 2px) 12px 0 / 1px 100% no-repeat; }
.tree li { height: 16px; display: flex; align-items: center; position: relative; white-space: pre; }
.tree em { font: normal 10px/16px "Liberation Mono", monospace; margin-top: 2px; }
.r { padding-left: 23px; }
.r .ic { margin-right: 5px; }
.r::before { content: ""; position: absolute; left: 19px; top: 8px; width: 4px; border-top: 1px dotted #777; }
.l { padding-left: 43px; }
.l .ic { margin-right: 4px; }
.l::before { content: ""; position: absolute; left: 31px; top: 0; height: 16px; border-left: 1px dotted #777; }
.l::after { content: ""; position: absolute; left: 32px; top: 8px; width: 10px; border-top: 1px dotted #777; }
.l.end::before { height: 8px; }
.l em { flex: none; }
.chev { position: absolute; left: 8px; top: 4px; width: 7px; height: 7px; border-right: 2px solid #b8b8b8; border-top: 2px solid #b8b8b8; transform: rotate(45deg); background: #fff; }
.chev.open { left: 9px; top: 2px; border-color: #444; transform: rotate(135deg); }
.sel span { background: #d8d8d8; margin-left: -4px; padding-left: 4px; padding-right: 4px; }
.sel .ic { background: #d8d8d8; box-shadow: -3px 0 0 #d8d8d8; }
.vscroll { position: absolute; right: 0; top: 0; bottom: 0; width: 17px; background: #f0f0f0; }
.sc-arrow { display: block; width: 9px; height: 6px; margin: 6px auto 4px; }
.sc-thumb { height: 266px; margin: 0 1px; background: #cdcdcd; }
.sc-down { position: absolute; left: 4px; bottom: 2px; margin: 0; }
.side-btn.last { border-bottom: 0; height: 17px; }

.work { flex: 1; min-width: 0; padding-left: 5px; display: flex; flex-direction: column; }
.bar2 { height: 26px; padding-left: 5px; background: linear-gradient(90deg, #f9f9f9 0 792px, #f0f0f0 792px); flex: none; }
.bar3 { height: 28px; padding: 0 0 2px 5px; background: linear-gradient(90deg, #f9f9f9 0 1063px, #f0f0f0 1063px); flex: none; }
.bar4 { height: 30px; padding-left: 4px; background: linear-gradient(90deg, #f7f7f7 0 812px, #f0f0f0 812px); flex: none; }
.combo { display: flex; align-items: center; justify-content: space-between; flex: none; height: 22px; background: #fff; padding-right: 3px; margin-right: -2px; }
.w1 { width: 55px; }
.w2 { width: 67px; }
.w3 { width: 44px; margin-left: -3px; }
.w3 + .car { margin-left: -3px; }
.bar4 .grip + .selbtn { margin-left: -6px; }
.selbtn { width: 51px; height: 23px; padding-left: 1px; gap: 5px; border: 1px solid #4a90c8; background: #e5f3ff; }
.selbtn + .car { margin-left: -4px; }
.canvas { width: 1185px; height: 507px; display: block; flex: none; }
.axis-label { font: 12px "Liberation Sans", sans-serif; fill: #eee; text-anchor: middle; }

.ime { position: absolute; left: 580px; top: 0; display: flex; align-items: flex-start; }
.ime-s { width: 28px; height: 28px; flex: none; }
.ime-bar { width: 178px; height: 26px; margin-left: -1px; padding-left: 5px; background: #f7f9fb; border: 1px solid #cfd6dc; border-top: 0; display: flex; align-items: center; gap: 6px; }
.ime-en { font-size: 14px; color: #1f7ac8; margin-right: 2px; }
.ime-ic { width: 16px; height: 16px; flex: none; }
.badge { position: absolute; left: 935px; top: -28px; width: 46px; height: 46px; border-radius: 50%; background: #3ab54a; border: 1px solid #cde8d0; box-shadow: 0 2px 4px rgba(0,0,0,.35); color: #fff; font: 700 12px/12px "Liberation Sans", sans-serif; text-align: center; padding-top: 29px; }
.bell { position: absolute; left: 1303px; top: 30px; width: 12px; height: 16px; }
.tail { position: absolute; left: 1354px; top: 27px; margin: 0; }
.pop { position: absolute; left: 1311px; top: 35px; width: 53px; }
.pop-top { height: 26px; background: #fff; display: flex; align-items: center; color: #aaa; padding-left: 3px; }
.pop-top span { flex: 1; }
.pop-top i { width: 20px; height: 19px; background: #e6e6e6; display: block; }
.pop-btn { height: 22px; line-height: 19px; text-align: center; background: #f0f0f0; border: 1px solid #888; border-right: 2px solid #666; border-bottom: 2px solid #666; box-shadow: 0 2px 3px rgba(0,0,0,.3); }
```
